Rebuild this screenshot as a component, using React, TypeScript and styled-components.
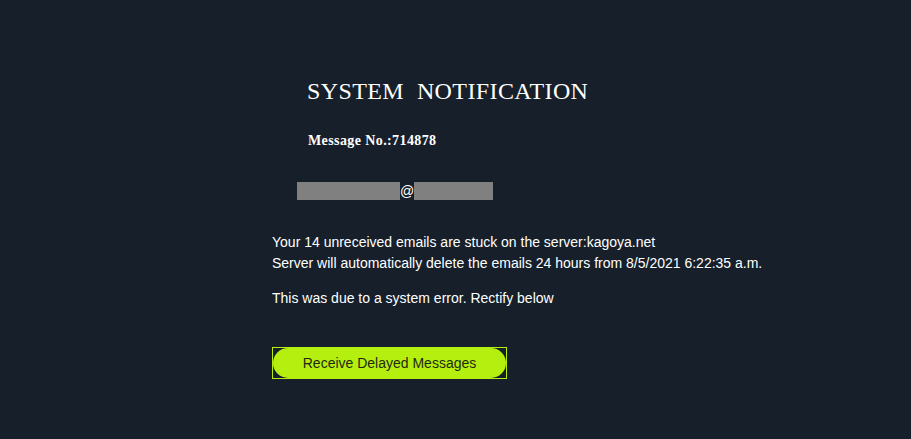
import React from "react";
import styled, { createGlobalStyle } from "styled-components";

const GlobalStyle = createGlobalStyle`
    html, body {
        margin: 0;
        padding: 0;
        background-color: #161f2a;
    }
`;

const Page = styled.div`
    min-height: 439px;
    background-color: #161f2a;
    padding: 78px 0 0 272px;
    box-sizing: border-box;
    color: #ffffff;
`;

const Heading = styled.h1`
    margin: 0 0 0 35px;
    font-family: "Liberation Serif", "Times New Roman", serif;
    font-weight: normal;
    font-size: 24px;
    line-height: 26px;
    white-space: pre;
    letter-spacing: 0.4px;
`;

const MessageNo = styled.p`
    margin: 29px 0 0 36px;
    font-family: "Liberation Serif", "Times New Roman", serif;
    font-weight: bold;
    font-size: 14px;
    line-height: 16px;
    letter-spacing: 0.4px;
`;

const AddressRow = styled.div`
    display: flex;
    align-items: center;
    margin: 33px 0 0 25px;
    height: 18px;
    font-family: "Liberation Sans", Arial, sans-serif;
    font-size: 14px;
`;

const Redacted = styled.span<{ $w: number }>`
    display: block;
    width: ${(p) => p.$w}px;
    height: 18px;
    background-color: #808080;
`;

const Body = styled.div`
    margin-top: 32px;
    font-family: "Liberation Sans", Arial, sans-serif;
    font-size: 14px;
    line-height: 21px;

    p {
        margin: 0;
    }

    p + p.gap {
        margin-top: 14px;
    }
`;

const ButtonFrame = styled.div`
    margin-top: 38px;
    width: 233px;
    height: 30px;
    border: 1px solid #b5ef0f;
`;

const Button = styled.a`
    display: flex;
    justify-content: center;
    align-items: center;
    height: 100%;
    border-radius: 15px;
    background-color: #b5ef0f;
    color: #1e2a10;
    font-family: "Liberation Sans", Arial, sans-serif;
    font-size: 14px;
    text-decoration: none;
    cursor: pointer;
`;

const App = () => {
    return (
        <>
            <GlobalStyle />
            <Page>
                <Heading>SYSTEM  NOTIFICATION</Heading>
                <MessageNo>Message No.:714878</MessageNo>
                <AddressRow>
                    <Redacted $w={103} />
                    <span>@</span>
                    <Redacted $w={79} />
                </AddressRow>
                <Body>
                    <p>Your 14 unreceived emails are stuck on the server:kagoya.net</p>
                    <p>Server will automatically delete the emails 24 hours from 8/5/2021 6:22:35 a.m.</p>
                    <p className="gap">This was due to a system error. Rectify below</p>
                </Body>
                <ButtonFrame>
                    <Button>Receive Delayed Messages</Button>
                </ButtonFrame>
            </Page>
        </>
    );
};

export default App;
